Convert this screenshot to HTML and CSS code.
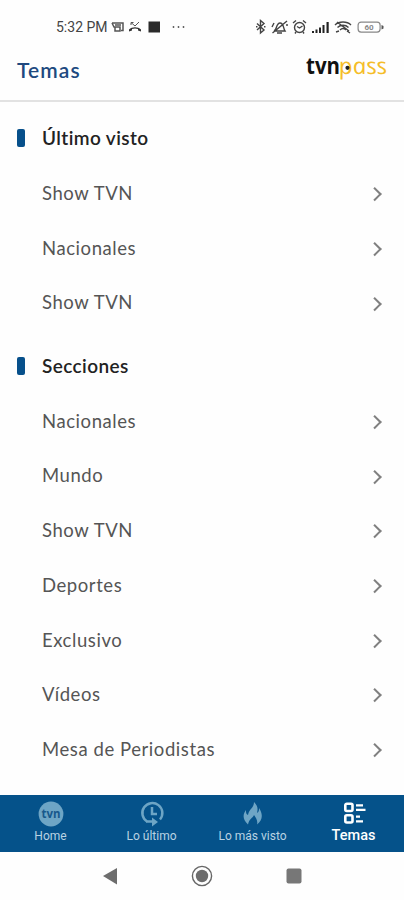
FILE: index.html
```
<!DOCTYPE html>
<html lang="es">

<head>
    <meta charset="UTF-8">
    <meta name="viewport" content="width=device-width, initial-scale=1.0">
    <title>Temas</title>
    <link rel="stylesheet" href="styles.css">
</head>

<body>
    <!-- Status bar -->
    <div class="status-bar">
        <span class="clock">5:32 PM</span>
        <svg class="status-left" width="78" height="16" viewBox="0 0 78 16">
            <path d="M1 4h11v7.500h-2M1 4l2 4h5M4 6h6M4 8v4h5V8z" fill="none" stroke="#555" stroke-width="1.500" />
            <path d="M18 12.500v-2c3-3 9-3 12 0v2l-3-1v-1.500c-2-.7-4-.7-6 0v1.500z" fill="#333" />
            <path d="M20 3.500l4 3.500 4-4M20 6V3.500h2.500" fill="none" stroke="#555" stroke-width="1" />
            <rect x="37.500" y="2.500" width="11.500" height="11" fill="#2b2b2b" />
            <circle cx="62.500" cy="8" r=".9" fill="#555" />
            <circle cx="67.500" cy="8" r=".9" fill="#555" />
            <circle cx="72.500" cy="8" r=".9" fill="#555" />
        </svg>
        <svg class="status-right" width="132" height="16" viewBox="0 0 132 16">
            <g fill="none" stroke="#444" stroke-width="1.400">
                <path d="M4 4.500l7 6.500-3.500 3V1.500L11 4.500 4 11M3 7.700h1.500M11 7.700h1.500" />
                <path d="M21 12c3-1 2-8 6-8 4 0 3 5 5 8zM24 14h5M34 2L19.500 14M19 8l2-4M33 6h2" />
                <circle cx="46.500" cy="8.500" r="5" />
                <path d="M44 7.500l2.500 1.500 3-2M40 4l3-2.500M53 4l-3-2.500M43 13l-1 1.500M50 13l1 1.500" />
                <path d="M82 6c4-4 12-4 16 0M84.500 8.500c3-3 8-3 11 0M87 11c2-2 4-2 6 0M83 13l3-1M94 12l3 2M84 3l12 9" />
            </g>
            <path d="M59 12h2v2h-2zM62.500 10.500h2V14h-2zM66 8.500h2V14h-2zM69.500 6h2v8h-2zM73.500 3h2.200v11h-2.200z" fill="#222" />
            <rect x="105.100" y="3.100" width="22" height="10" rx="3" fill="#fff" stroke="#888" stroke-width="1.200" />
            <path d="M128.500 6l2 1v2.500l-2 1z" fill="#555" />
            <text class="battery" x="116" y="11" text-anchor="middle">60</text>
        </svg>
    </div>

    <header class="header">
        <h1>Temas</h1>
        <svg class="logo" width="82" height="40" viewBox="0 0 82 40">
            <text class="logo-tvn" x="0" y="25" textLength="34" lengthAdjust="spacingAndGlyphs">tvn</text>
            <!-- Skewed back upright to keep the italic's round "a" -->
            <text class="logo-pass" transform="translate(34 25) skewX(12)" x="0" y="0" textLength="48.500" lengthAdjust="spacingAndGlyphs">pass</text>
            <circle cx="41.500" cy="18.800" r="2.100" fill="#222" />
        </svg>
    </header>

    <main>
        <section class="group">
            <h2>Último visto</h2>
            <ul>
                <li>Show TVN</li>
                <li>Nacionales</li>
                <li>Show TVN</li>
            </ul>
        </section>
        <section class="group">
            <h2>Secciones</h2>
            <ul>
                <li>Nacionales</li>
                <li>Mundo</li>
                <li>Show TVN</li>
                <li>Deportes</li>
                <li>Exclusivo</li>
                <li>Vídeos</li>
                <li>Mesa de Periodistas</li>
            </ul>
        </section>
    </main>

    <nav class="tabs">
        <div class="tab">
            <svg width="26" height="26" viewBox="0 0 26 26">
                <circle cx="13" cy="13" r="12.400" fill="#6ea5c5" />
                <text class="tab-tvn" x="13" y="17" text-anchor="middle" textLength="19" lengthAdjust="spacingAndGlyphs">tvn</text>
            </svg>
            <span>Home</span>
        </div>
        <div class="tab">
            <svg width="26" height="26" viewBox="0 0 26 26" fill="none" stroke="#6ea5c5" stroke-width="2.500">
                <path d="M8 20.500A10 10 0 1 1 21 18.500" />
                <path d="M13 6V13h5" />
                <path d="M7 20.500h7" />
                <path d="M13 16.500l6 4.500-6 4.500z" fill="#6ea5c5" stroke="none" />
            </svg>
            <span>Lo último</span>
        </div>
        <div class="tab">
            <svg width="26" height="26" viewBox="0 0 26 26" fill="#6ea5c5">
                <path d="M8 23.500C2 18 3 13 6 9c0 3 0 4 2 5 1-6 6-7 6-13 4 4 4 7 3 11 2-1 2-3 2-5 4 6 4 12-2 16.500 1-4-1-6.500-3-9.500-1 3-5 4-6 9.500z" />
            </svg>
            <span>Lo más visto</span>
        </div>
        <div class="tab active">
            <svg width="26" height="26" viewBox="0 0 26 26" fill="none" stroke="#fff" stroke-width="2.600">
                <rect x="4.300" y="2.800" width="7.200" height="7.200" rx="1.500" />
                <rect x="4.300" y="14.300" width="7.200" height="7.200" rx="1.500" />
                <path d="M15 4.300h7M15 8.800h9.500M15 15.700h4M15 20.300h7" stroke-width="2.200" />
            </svg>
            <span>Temas</span>
        </div>
    </nav>

    <!-- System buttons -->
    <div class="system-nav">
        <svg width="24" height="24" viewBox="0 0 24 24">
            <path d="M5 12L19 4v16.500z" fill="#6d6d6d" />
        </svg>
        <svg width="24" height="24" viewBox="0 0 24 24">
            <circle cx="12" cy="12" r="9.600" fill="none" stroke="#666" stroke-width="1.400" />
            <circle cx="12" cy="12" r="6.200" fill="#6d6d6d" />
        </svg>
        <svg width="24" height="24" viewBox="0 0 24 24">
            <rect x="4.500" y="4.500" width="15" height="15" rx="2" fill="#777" />
        </svg>
    </div>
</body>

</html>
```
FILE: styles.css
```
body {
    margin: 0;
    height: 900px;
    display: flex;
    flex-direction: column;
    background-color: #fefefe;
    font-family: Lato, sans-serif;
    overflow: hidden;
}

.status-bar {
    display: flex;
    align-items: center;
    height: 38px;
    padding: 16px 19px 0 56px;
    box-sizing: border-box;
}

.clock {
    width: 55px;
    font: 14px/16px Roboto, sans-serif;
    color: #444;
    white-space: nowrap;
}

.status-right {
    margin-left: auto;
}

.battery {
    font: bold 8px Roboto, sans-serif;
    fill: #888;
}

.header {
    display: flex;
    justify-content: space-between;
    align-items: center;
    height: 64px;
    padding: 0 16px 0 17px;
    box-sizing: border-box;
    border-bottom: 2px solid #e2e2e2;
}

.header h1 {
    margin: 0;
    font-size: 21px;
    font-weight: 600;
    letter-spacing: 1.1px;
    color: #20497f;
}

.logo {
    overflow: visible;
}

.logo-tvn {
    font: bold 23px "Open Sans", sans-serif;
    fill: #111;
}

.logo-pass {
    font: italic 23px "Open Sans", sans-serif;
    fill: #f5bd28;
}

main {
    flex: 1;
    padding-top: 9px;
}

.group {
    margin-bottom: 9px;
}

.group h2 {
    display: flex;
    align-items: center;
    height: 54.7px;
    margin: 0;
    padding: 0 0 1px 17px;
    box-sizing: border-box;
    font-size: 19px;
    font-weight: 600;
    letter-spacing: 0.4px;
    color: #222;
}

.group h2::before {
    content: "";
    width: 8px;
    height: 18px;
    margin-right: 17px;
    border-radius: 2px;
    background-color: #07508b;
}

.group ul {
    margin: 0;
    padding: 0;
    list-style: none;
}

.group li {
    display: flex;
    justify-content: space-between;
    align-items: center;
    height: 54.7px;
    padding: 0 24.5px 0 42px;
    font-size: 18.5px;
    letter-spacing: 0.57px;
    color: #555;
}

/* Chevron */
.group li::after {
    content: "";
    width: 7.5px;
    height: 7.5px;
    margin-top: 2px;
    border: solid #808080;
    border-width: 2px 2px 0 0;
    transform: rotate(45deg);
}

.tabs {
    display: grid;
    grid-template-columns: repeat(4, 1fr);
    height: 57px;
    background-color: #05528a;
}

.tab {
    display: flex;
    flex-direction: column;
    align-items: center;
    padding-top: 6px;
    font: 12px/19px Roboto, sans-serif;
    color: #b9d2e3;
    white-space: nowrap;
}

.tab-tvn {
    font: bold 13px "Open Sans", sans-serif;
    fill: #17588c;
}

.tab.active {
    font-size: 14.5px;
    line-height: 17px;
    font-weight: 500;
    color: #fff;
}

.system-nav {
    display: flex;
    justify-content: center;
    gap: 68px;
    height: 48px;
    padding-top: 12px;
    box-sizing: border-box;
}
```
